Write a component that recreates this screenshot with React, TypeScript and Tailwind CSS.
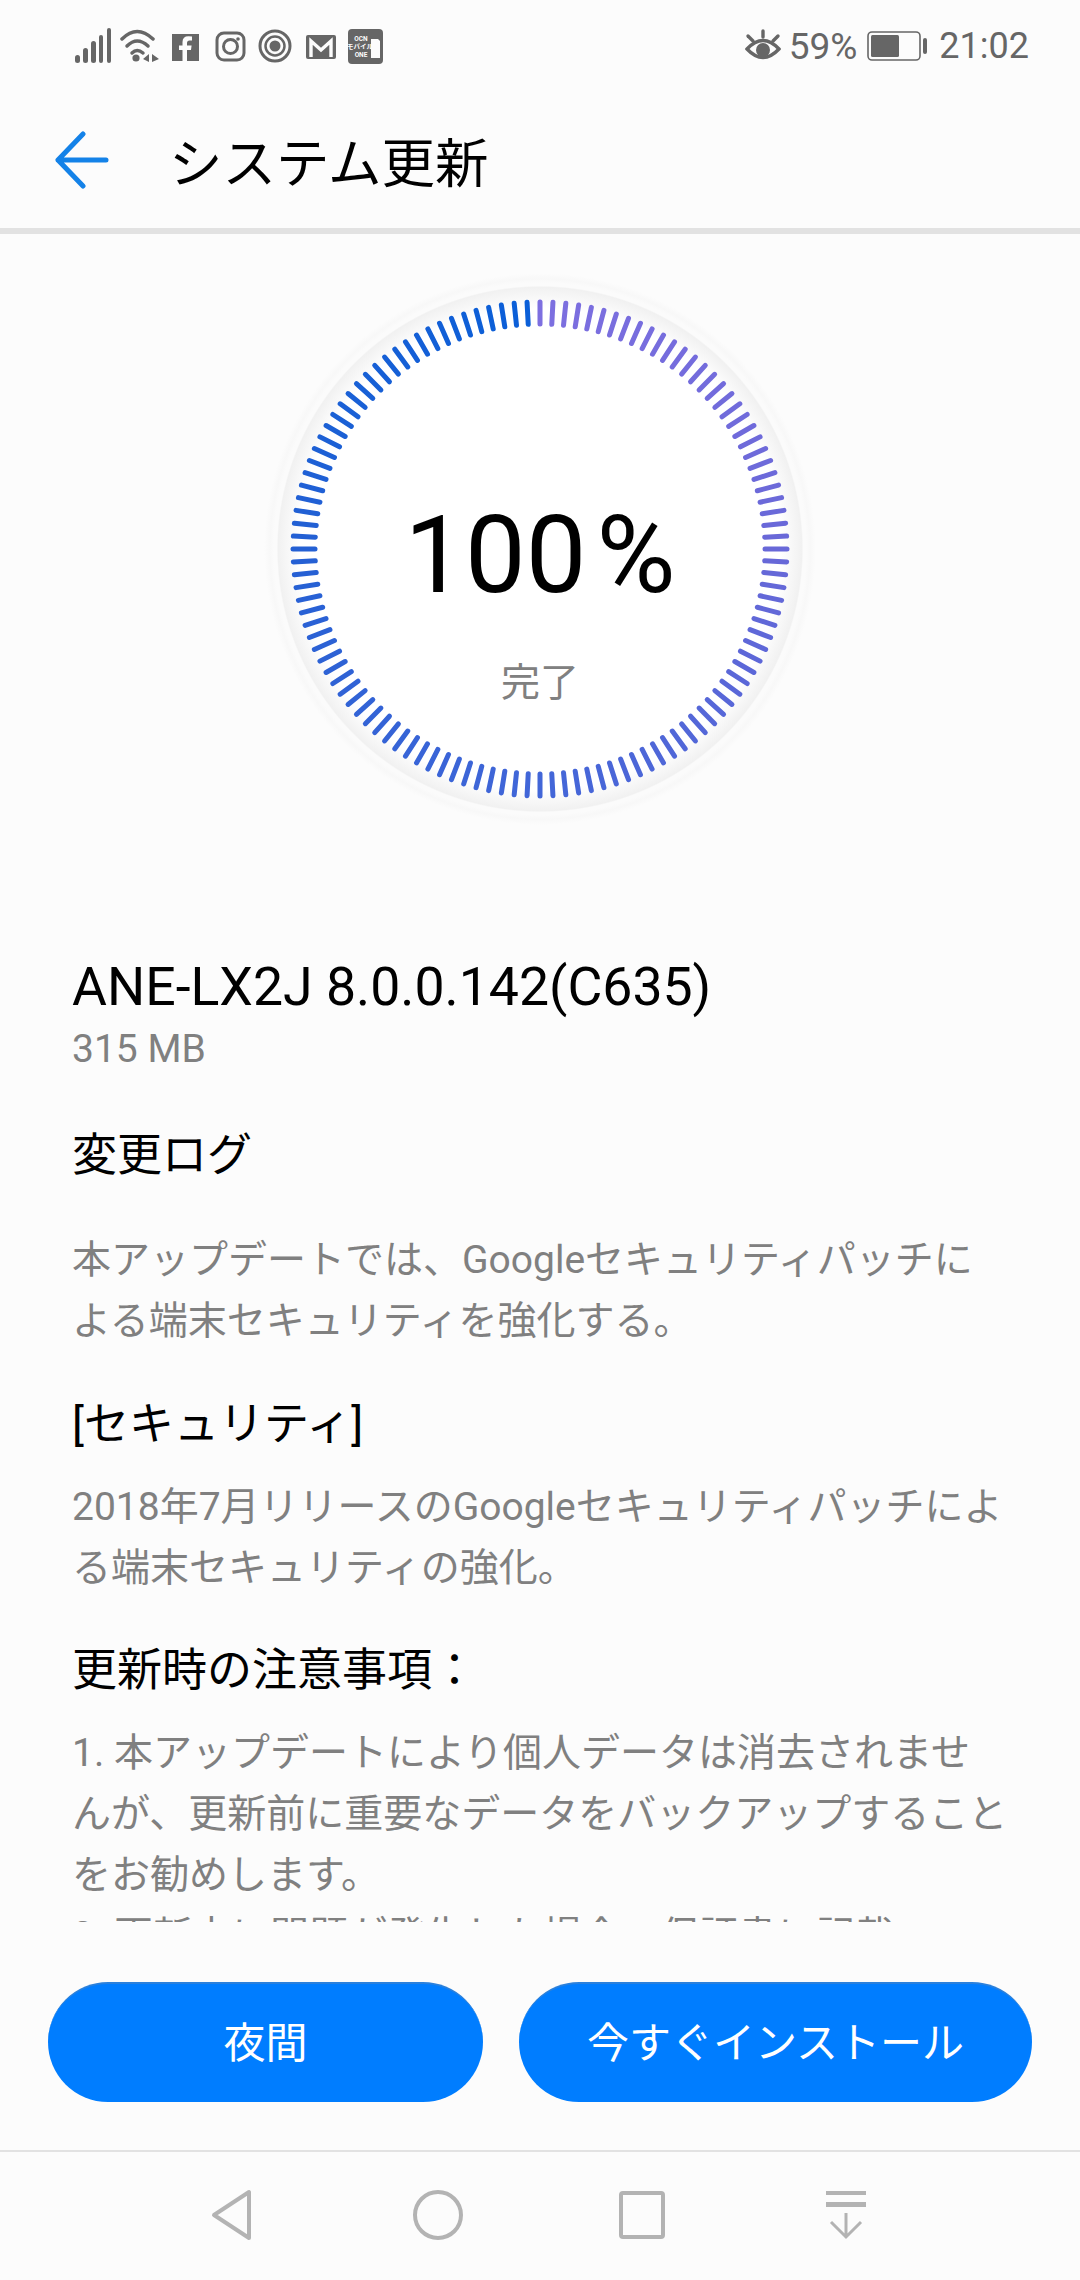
const FONT = "font-['Roboto','Noto_Sans_CJK_JP',sans-serif]";

// colour stops, clockwise from the tick right of 12 o'clock
const STOPS: [number, number[]][] = [
  [0, [125, 111, 224]],
  [90, [104, 104, 216]],
  [180, [66, 102, 216]],
  [270, [36, 96, 212]],
  [360, [10, 95, 216]],
];

function tickColor(angle: number) {
  for (let i = 0; i < STOPS.length - 1; i++) {
    const [a0, c0] = STOPS[i];
    const [a1, c1] = STOPS[i + 1];
    if (angle <= a1) {
      const t = (angle - a0) / (a1 - a0);
      const c = c0.map((v, j) => Math.round(v + (c1[j] - v) * t));
      return `rgb(${c[0]},${c[1]},${c[2]})`;
    }
  }
  return 'rgb(10,95,216)';
}

function Ring() {
  const c = 280;
  const ticks = Array.from({ length: 120 }, (_, i) => i * 3);
  return (
    <svg width="560" height="560" viewBox="0 0 560 560" className="block">
      <defs>
        <radialGradient id="band" cx="50%" cy="50%" r="50%">
          <stop offset="0.86" stopColor="#ffffff" />
          <stop offset="0.935" stopColor="#f1f1f1" />
          <stop offset="0.94" stopColor="#fbfbfb" />
          <stop offset="0.95" stopColor="#fbfbfb" />
          <stop offset="0.965" stopColor="#f8f8f8" />
          <stop offset="0.985" stopColor="#fcfcfc" />
          <stop offset="1" stopColor="#fcfcfc" />
        </radialGradient>
      </defs>
      <circle cx={c} cy={c} r="280" fill="url(#band)" />
      {ticks.map((a) => {
        const rad = (a * Math.PI) / 180;
        const s = Math.sin(rad);
        const k = Math.cos(rad);
        return (
          <line
            key={a}
            x1={c + s * 225}
            y1={c - k * 225}
            x2={c + s * 247}
            y2={c - k * 247}
            stroke={tickColor(a)}
            strokeWidth="5"
            strokeLinecap="round"
          />
        );
      })}
    </svg>
  );
}

function StatusLeft() {
  const gray = '#666666';
  return (
    <svg width="310" height="40" viewBox="0 0 310 40" className="block">
      {/* signal */}
      <g fill={gray}>
        <rect x="0" y="29" width="5" height="8" rx="2.5" />
        <rect x="8" y="22" width="5" height="15" rx="2.5" />
        <rect x="16" y="15" width="5" height="22" rx="2.5" />
        <rect x="24" y="9" width="4" height="28" rx="2" />
        <rect x="32" y="2" width="4" height="35" rx="2" />
      </g>
      {/* wifi */}
      <g fill="none" stroke={gray} strokeWidth="3.5" strokeLinecap="round">
        <path d="M47 13 Q62 -2 78 13" />
        <path d="M52 20 Q62 10 73 20" />
        <path d="M57 27 Q62 22 68 27" />
      </g>
      <circle cx="61" cy="32" r="3.6" fill={gray} />
      <path d="M74 28 L74 36 L68 33 Z M77 28 L77 36 L84 33 Z" fill={gray} />
      {/* facebook */}
      <rect x="97" y="8" width="27" height="27" fill={gray} />
      <path
        d="M112 35 V24 H116 L116.6 19.5 H112 V17 Q112 14.5 114.5 14.5 H117 V10.5 Q115 10.2 113.5 10.2 Q107.5 10.2 107.5 16 V19.5 H104 V24 H107.5 V35 Z"
        fill="#fcfcfc"
      />
      {/* instagram */}
      <rect x="142" y="7" width="27" height="27" rx="7" fill="none" stroke={gray} strokeWidth="3" />
      <circle cx="155.5" cy="20.5" r="7" fill="none" stroke={gray} strokeWidth="3" />
      <circle cx="163" cy="13" r="1.8" fill={gray} />
      {/* target */}
      <circle cx="200" cy="20" r="15" fill="none" stroke={gray} strokeWidth="3" />
      <circle cx="200" cy="20" r="9.5" fill="none" stroke={gray} strokeWidth="2.5" />
      <circle cx="200" cy="20" r="5.5" fill={gray} />
      {/* gmail */}
      <rect x="231" y="9" width="30" height="24" rx="2" fill={gray} />
      <path d="M236 31 V15 L246 24 L256 15 V31" fill="none" stroke="#fcfcfc" strokeWidth="3.4" />
      {/* ocn */}
      <rect x="273" y="3" width="35" height="35" rx="4" fill={gray} />
      <g fill="#fcfcfc" fontSize="6.5" fontFamily="Roboto, 'Noto Sans CJK JP', sans-serif" textAnchor="middle" fontWeight="700">
        <text x="286" y="15">OCN</text>
        <text x="285" y="23">モバイル</text>
        <text x="286" y="31">ONE</text>
      </g>
      <path d="M296 13 H303 L305 15 V32 H296 Z" fill="#fcfcfc" />
    </svg>
  );
}

function Eye() {
  return (
    <svg width="36" height="34" viewBox="0 0 36 34" className="block">
      <g fill="none" stroke="#666666" strokeWidth="3.4" strokeLinecap="round">
        <path d="M2 20 Q18 3 34 20 Q18 37 2 20 Z" />
        <path d="M18 2 V8" />
        <path d="M3 7 L8 12" />
        <path d="M33 7 L28 12" />
      </g>
      <circle cx="18" cy="21" r="7" fill="#666666" />
    </svg>
  );
}

function Battery() {
  return (
    <svg width="61" height="30" viewBox="0 0 61 30" className="block">
      <rect x="1" y="1" width="52" height="28" rx="4" fill="none" stroke="#666666" strokeWidth="1.6" />
      <rect x="4" y="4" width="28" height="22" rx="1.5" fill="#666666" />
      <rect x="56" y="7" width="4" height="16" rx="2" fill="#666666" />
    </svg>
  );
}

function BackArrow() {
  return (
    <svg width="58" height="58" viewBox="0 0 58 58" className="block">
      <path
        d="M29 3 L4 29 L29 55 M4 29 H52"
        fill="none"
        stroke="#1482e8"
        strokeWidth="5"
        strokeLinecap="round"
        strokeLinejoin="round"
      />
    </svg>
  );
}

function NavBar() {
  const g = '#b3b3b3';
  return (
    <div className="flex-1 flex items-center justify-center pb-[2px] gap-[142px]">
      <svg width="62" height="52" viewBox="0 0 62 52" className="block">
        <path d="M46 3 V49 L11 26 Z" fill="none" stroke={g} strokeWidth="4" strokeLinejoin="round" />
      </svg>
      <svg width="62" height="52" viewBox="0 0 62 52" className="block">
        <circle cx="31" cy="26" r="23" fill="none" stroke={g} strokeWidth="4" />
      </svg>
      <svg width="62" height="52" viewBox="0 0 62 52" className="block">
        <rect x="10" y="4" width="42" height="44" rx="2" fill="none" stroke={g} strokeWidth="4" />
      </svg>
      <svg width="62" height="52" viewBox="0 0 62 52" className="block">
        <g fill={g}>
          <rect x="11" y="2" width="40" height="4" />
          <rect x="11" y="13" width="40" height="5" />
        </g>
        <path d="M31 24 V48 M16 33 L31 48 L46 33" fill="none" stroke={g} strokeWidth="3" />
      </svg>
    </div>
  );
}

const heading = 'text-[45px] leading-[60px] text-black';
const body = 'text-[39px] leading-[61px] text-[#808080]';

export default function App() {
  return (
    <div className={`w-[1080px] h-[2280px] bg-[#fcfcfc] flex flex-col overflow-hidden ${FONT}`}>
      {/* Status bar */}
      <div className="h-[92px] shrink-0 flex items-center justify-between pl-[75px] pr-[51px] text-[#666666]">
        <StatusLeft />
        <div className="flex items-center">
          <Eye />
          <span className="ml-[8px] text-[37px] leading-none">59%</span>
          <span className="ml-[10px]">
            <Battery />
          </span>
          <span className="ml-[11px] text-[36px] leading-none">21:02</span>
        </div>
      </div>

      {/* Header */}
      <div className="h-[136px] shrink-0 flex items-center pl-[54px]">
        <BackArrow />
        <h1 className="ml-[57px] mt-[10px] text-[53.5px] leading-none text-black font-normal">システム更新</h1>
      </div>
      <div className="h-[6px] shrink-0 bg-[#e2e2e2]" />

      {/* Scroll area */}
      <div className="flex-1 min-h-0 overflow-hidden">
        <div className="relative w-[560px] h-[560px] mx-auto mt-[35px]">
          <Ring />
          <div className="absolute inset-0 flex flex-col items-center">
            <div className="mt-[232px] text-[108px] leading-[108px] text-black whitespace-nowrap">
              100<span className="ml-[10px]">%</span>
            </div>
            <div className="mt-[51px] text-[39px] leading-[46px] text-[#808080]">完了</div>
          </div>
        </div>

        <div className="px-[72px] mt-[128px] whitespace-nowrap">
          <h2 className="text-[53.6px] leading-[60px] text-black font-normal">ANE-LX2J 8.0.0.142(C635)</h2>
          <p className="text-[39px] leading-[44px] mt-[10px] text-[#808080]">315 MB</p>

          <h3 className={`${heading} mt-[55px] font-normal`}>変更ログ</h3>
          <p className={`${body} mt-[44px]`}>
            本アップデートでは、Googleセキュリティパッチに
            <br />
            よる端末セキュリティを強化する。
          </p>

          <h3 className={`${heading} mt-[43px] font-normal`}>[セキュリティ]</h3>
          <p className={`${body} mt-[22px]`}>
            2018年7月リリースのGoogleセキュリティパッチによ
            <br />
            る端末セキュリティの強化。
          </p>

          <h3 className={`${heading} mt-[42px] font-normal`}>更新時の注意事項：</h3>
          <p className={`${body} mt-[22px]`}>
            1. 本アップデートにより個人データは消去されませ
            <br />
            んが、更新前に重要なデータをバックアップすること
            <br />
            をお勧めします。
            <br />
            2. 更新中に問題が発生した場合、保証書に記載
          </p>
        </div>
      </div>

      {/* Buttons */}
      <div className="shrink-0 flex pl-[48px] pr-[48px] gap-[36px] pt-[60px] pb-[48px]">
        <button className="w-[435px] h-[120px] rounded-full bg-[#007dff] border-t-2 border-[#2a80dc] text-white text-[42px]">
          夜間
        </button>
        <button className="w-[513px] h-[120px] rounded-full bg-[#007dff] border-t-2 border-[#2a80dc] text-white text-[42px]">
          今すぐインストール
        </button>
      </div>

      {/* Nav */}
      <div className="h-[130px] shrink-0 border-t-2 border-[#e2e2e2] flex">
        <NavBar />
      </div>
    </div>
  );
}
